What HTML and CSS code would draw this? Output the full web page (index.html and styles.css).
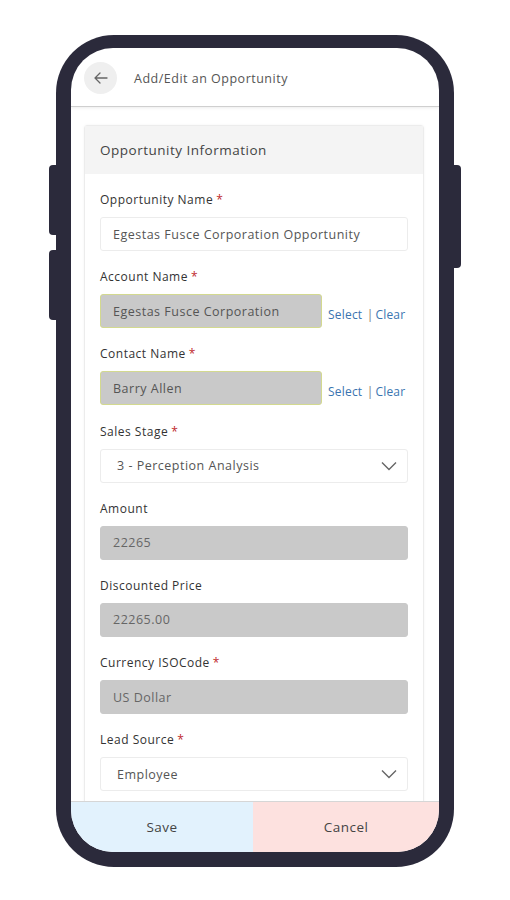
FILE: index.html
```html
<!DOCTYPE html>
<html>
<head>
<meta charset="utf-8">
<link rel="stylesheet" href="styles.css">
</head>
<body>
<div class="stage">
  <div class="phone">
    <div class="screen">
      <div class="topbar">
        <div class="back">
          <svg width="14" height="12" viewBox="0 0 14 12"><path d="M13 6H1.5M6 1L1 6l5 5" fill="none" stroke="#666" stroke-width="1.3" stroke-linecap="round" stroke-linejoin="round"/></svg>
        </div>
        <div class="title">Add/Edit an Opportunity</div>
      </div>
      <div class="scroll">
        <div class="card">
          <div class="card-head">Opportunity Information</div>
          <div class="card-body">
            <div class="field">
              <div class="label">Opportunity Name<span class="req">*</span></div>
              <div class="input">Egestas Fusce Corporation Opportunity</div>
            </div>
            <div class="field">
              <div class="label">Account Name<span class="req">*</span></div>
              <div class="lookup">
                <div class="input locked">Egestas Fusce Corporation</div>
                <div class="links"><span>Select</span> <span class="bar">|</span><span>Clear</span></div>
              </div>
            </div>
            <div class="field">
              <div class="label">Contact Name<span class="req">*</span></div>
              <div class="lookup">
                <div class="input locked">Barry Allen</div>
                <div class="links"><span>Select</span> <span class="bar">|</span><span>Clear</span></div>
              </div>
            </div>
            <div class="field">
              <div class="label">Sales Stage<span class="req">*</span></div>
              <div class="input select">
                <span>3 - Perception Analysis</span>
                <svg width="16" height="10" viewBox="0 0 16 10"><path d="M1 1.5l7 7 7-7" fill="none" stroke="#666" stroke-width="1.4"/></svg>
              </div>
            </div>
            <div class="field">
              <div class="label">Amount</div>
              <div class="input disabled">22265</div>
            </div>
            <div class="field">
              <div class="label">Discounted Price</div>
              <div class="input disabled">22265.00</div>
            </div>
            <div class="field">
              <div class="label">Currency ISOCode<span class="req">*</span></div>
              <div class="input disabled">US Dollar</div>
            </div>
            <div class="field">
              <div class="label">Lead Source<span class="req">*</span></div>
              <div class="input select">
                <span>Employee</span>
                <svg width="16" height="10" viewBox="0 0 16 10"><path d="M1 1.5l7 7 7-7" fill="none" stroke="#666" stroke-width="1.4"/></svg>
              </div>
            </div>
          </div>
        </div>
      </div>
      <div class="footer">
        <div class="btn save">Save</div>
        <div class="btn cancel">Cancel</div>
      </div>
    </div>
  </div>
</div>
</body>
</html>
```

FILE: styles.css
```css
html, body {
  margin: 0;
  padding: 0;
  background: #ffffff;
}
body {
  font-family: "Open Sans", "Noto Sans", sans-serif;
  color: #333;
  letter-spacing: 0.5px;
}
.stage {
  width: 510px;
  height: 900px;
  padding-top: 35px;
  box-sizing: border-box;
  display: flex;
  justify-content: center;
  align-items: flex-start;
}
.phone {
  position: relative;
  width: 398px;
  height: 832px;
  box-sizing: border-box;
  background: #2b2a3b;
  border-radius: 58px;
  padding: 13px 15px 15px 15px;
}
.phone::before {
  content: "";
  position: absolute;
  left: -7px;
  top: 130px;
  width: 8px;
  height: 70px;
  background: #2b2a3b;
  border-radius: 4px 0 0 4px;
  box-shadow: 0 85px 0 #2b2a3b;
}
.phone::after {
  content: "";
  position: absolute;
  right: -7px;
  top: 130px;
  width: 8px;
  height: 103px;
  background: #2b2a3b;
  border-radius: 0 4px 4px 0;
}
.screen {
  width: 100%;
  height: 100%;
  background: #fff;
  border-radius: 42px;
  overflow: hidden;
  display: flex;
  flex-direction: column;
}
.topbar {
  flex: 0 0 auto;
  height: 58px;
  display: flex;
  align-items: center;
  padding-left: 13px;
  border-bottom: 1.5px solid #cfcfcf;
  box-shadow: 0 1px 3px rgba(0,0,0,0.08);
  position: relative;
  z-index: 1;
}
.back {
  width: 33px;
  height: 32px;
  border-radius: 50%;
  background: #efefef;
  display: flex;
  align-items: center;
  justify-content: center;
  margin-top: 2px;
}
.title {
  margin-left: 17px;
  font-size: 12.5px;
  color: #555;
  margin-top: 2px;
}
.scroll {
  flex: 1 1 auto;
  overflow: hidden;
  padding: 18px 15px 0 13px;
}
.card {
  border: 1px solid #ececec;
  border-radius: 3px;
  box-shadow: 0 0 3px rgba(0,0,0,0.05);
}
.card-head {
  background: #f4f4f4;
  height: 48px;
  display: flex;
  align-items: center;
  padding-left: 15px;
  font-size: 13.5px;
  color: #444;
}
.card-body {
  padding: 17px 15px 80px 15px;
}
.field {
  margin-bottom: 17.2px;
}
.label {
  font-size: 12px;
  color: #333;
  height: 18px;
  line-height: 18px;
  margin-bottom: 8px;
}
.req {
  color: #c0282d;
  margin-left: 3px;
}
.input {
  height: 34px;
  box-sizing: border-box;
  border: 1px solid #ececec;
  border-radius: 3px;
  background: #fff;
  display: flex;
  align-items: center;
  padding-left: 12px;
  font-size: 12.5px;
  color: #555;
}
.input.locked {
  width: 222px;
  background: #c9c9c9;
  border: 1.5px solid #d3d98f;
  color: #555;
}
.input.disabled {
  background: #c9c9c9;
  border-color: #c9c9c9;
  color: #666;
}
.input.select {
  justify-content: space-between;
  padding-left: 16px;
  padding-right: 10px;
}
.lookup {
  display: flex;
  align-items: center;
}
.links {
  margin-left: 6px;
  margin-top: 6px;
  font-size: 12px;
  color: #3a74b0;
  white-space: nowrap;
  letter-spacing: 0.2px;
}
.links .bar {
  color: #777;
  margin: 0 2px 0 1px;
}
.footer {
  flex: 0 0 50px;
  display: flex;
  border-top: 1.5px solid #d6d6d6;
  position: relative;
  z-index: 1;
}
.btn {
  flex: 1 1 50%;
  display: flex;
  align-items: center;
  justify-content: center;
  font-size: 13.5px;
  color: #444;
}
.save {
  background: #e2f2fd;
  flex: 0 0 182px;
}
.cancel {
  background: #fde1df;
}
```
